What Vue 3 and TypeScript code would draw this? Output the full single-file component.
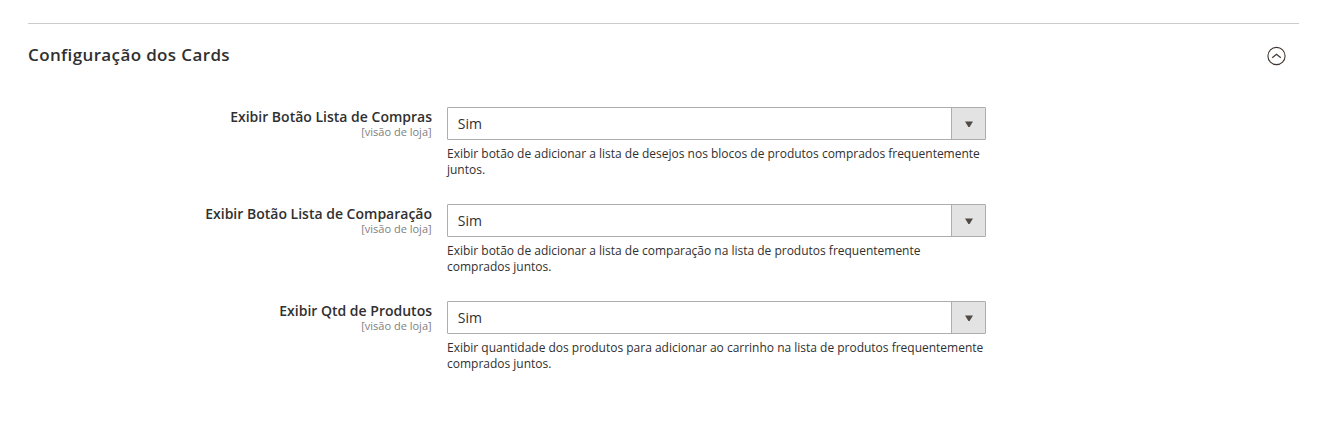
<script setup lang="ts">
interface Field {
  label: string
  value: string
  note: string
}

const fields: Field[] = [
  {
    label: 'Exibir Botão Lista de Compras',
    value: 'Sim',
    note: 'Exibir botão de adicionar a lista de desejos nos blocos de produtos comprados frequentemente juntos.',
  },
  {
    label: 'Exibir Botão Lista de Comparação',
    value: 'Sim',
    note: 'Exibir botão de adicionar a lista de comparação na lista de produtos frequentemente comprados juntos.',
  },
  {
    label: 'Exibir Qtd de Produtos',
    value: 'Sim',
    note: 'Exibir quantidade dos produtos para adicionar ao carrinho na lista de produtos frequentemente comprados juntos.',
  },
]
</script>

<template>
  <section class="section">
    <header class="head">
      <h2 class="title">Configuração dos Cards</h2>
      <svg class="toggle" width="19" height="20" viewBox="0 0 19 20" fill="none" stroke="#41362f">
        <circle cx="9.5" cy="10" r="8.6" stroke-width="1.1" />
        <path d="M5.2 11.7 L9.5 8.3 L13.8 11.7" stroke-width="1.2" />
      </svg>
    </header>
    <div class="fields">
      <div v-for="field in fields" :key="field.label" class="field">
        <div class="label">
          <span class="name">{{ field.label }}</span>
          <span class="scope">[visão de loja]</span>
        </div>
        <div class="control">
          <div class="select">
            <span class="value">{{ field.value }}</span>
            <span class="arrow">
              <svg width="8" height="6" viewBox="0 0 8 6"><path d="M0 0.5H8L4.6 6H3.4Z" fill="#514943" /></svg>
            </span>
          </div>
          <p class="note">{{ field.note }}</p>
        </div>
      </div>
    </div>
  </section>
</template>

<style>
body {
  background: #fff;
}
</style>

<style scoped>
.section {
  margin: 23px 24px 0 28px;
  border-top: 1px solid #ccc;
  font-family: "Open Sans", "Noto Sans", sans-serif;
  color: #303030;
}
.head {
  display: flex;
  justify-content: space-between;
  align-items: center;
  height: 62px;
  padding-right: 13px;
}
.title {
  margin: 0;
  font-size: 17px;
  line-height: 24px;
  font-weight: 600;
  letter-spacing: 0.37px;
}
.toggle {
  display: block;
  margin-top: 2px;
}
.fields {
  padding-top: 21px;
}
.field {
  display: flex;
  height: 97px;
}
.label {
  width: 404px;
  padding-top: 1px;
  text-align: right;
}
.name,
.scope {
  display: block;
  white-space: nowrap;
}
.name {
  font-size: 14px;
  line-height: 18px;
  font-weight: 600;
}
.scope {
  padding-right: 0.4px;
  font-size: 11px;
  line-height: 12px;
  color: #808080;
}
.control {
  width: 539px;
  margin-left: 15px;
}
.select {
  box-sizing: border-box;
  display: flex;
  justify-content: space-between;
  height: 33px;
  border: 1px solid #adadad;
  border-radius: 1px;
}
.value {
  padding-left: 9.8px;
  font-size: 14px;
  line-height: 32px;
}
.arrow {
  display: flex;
  align-items: center;
  justify-content: center;
  width: 33px;
  border-left: 1px solid #adadad;
  background: #e3e3e3;
}
.note {
  margin: 6px 0 0;
  font-size: 12px;
  line-height: 16px;
  letter-spacing: -0.008px;
}
</style>
